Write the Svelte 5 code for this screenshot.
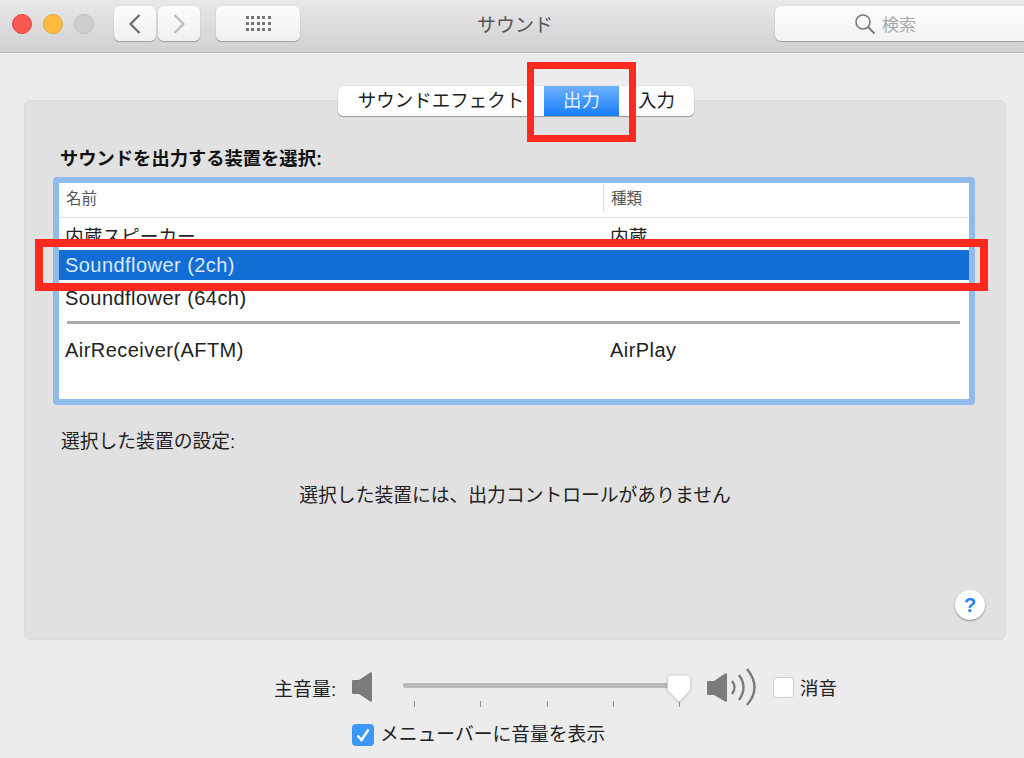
<script>
	const devices = [
		{ name: '内蔵スピーカー', type: '内蔵', cjk: true },
		{ name: 'Soundflower (2ch)', type: '', selected: true },
		{ name: 'Soundflower (64ch)', type: '' }
	];
	const ticks = [0, 1, 2, 3, 4];
</script>

<div class="window">
	<header class="toolbar">
		<div class="toolbar-left">
			<div class="lights">
				<span class="light red"></span>
				<span class="light yellow"></span>
				<span class="light gray"></span>
			</div>
			<div class="nav">
				<button class="tool-btn nav-btn" type="button" aria-label="戻る">
					<svg width="14" height="22" viewBox="0 0 14 22"><path d="M11.5 2 L2.5 11 L11.5 20" fill="none" stroke="#6c6c6c" stroke-width="2.2" /></svg>
				</button>
				<button class="tool-btn nav-btn" type="button" aria-label="進む">
					<svg width="14" height="22" viewBox="0 0 14 22"><path d="M2.5 2 L11.5 11 L2.5 20" fill="none" stroke="#bdbdbd" stroke-width="2.2" /></svg>
				</button>
			</div>
			<button class="tool-btn grid-btn" type="button" aria-label="すべて表示">
				<span class="dots">
					{#each Array(15) as _}
						<i></i>
					{/each}
				</span>
			</button>
		</div>
		<div class="title">サウンド</div>
		<div class="search">
			<svg width="22" height="22" viewBox="0 0 22 22">
				<circle cx="9" cy="9" r="7" fill="none" stroke="#777" stroke-width="1.6" />
				<path d="M14 14 L20.5 20.5" stroke="#777" stroke-width="1.8" />
			</svg>
			<span>検索</span>
		</div>
	</header>

	<main class="content">
		<section class="panel">
			<div class="tabs">
				<div class="tab first">サウンドエフェクト</div>
				<div class="tab active">出力</div>
				<div class="tab last">入力</div>
			</div>

			<h2 class="heading">サウンドを出力する装置を選択:</h2>

			<div class="list">
				<div class="list-head">
					<div class="col-name">名前</div>
					<div class="col-type">種類</div>
				</div>
				{#each devices as d}
					<div class="row" class:selected={d.selected} class:cjk={d.cjk}>
						<div class="col-name">{d.name}</div>
						<div class="col-type">{d.type}</div>
					</div>
				{/each}
				<div class="divider"></div>
				<div class="row">
					<div class="col-name">AirReceiver(AFTM)</div>
					<div class="col-type">AirPlay</div>
				</div>
			</div>

			<div class="settings-label">選択した装置の設定:</div>
			<div class="no-controls">選択した装置には、出力コントロールがありません</div>

			<div class="help-row">
				<button class="help" type="button">?</button>
			</div>
		</section>

		<div class="volume">
			<span class="volume-label">主音量:</span>
			<svg class="spk-low" width="20" height="30" viewBox="0 0 20 30">
				<path d="M0 9 Q0 8 1 8 L7 8 L19 0 L20 1 L20 29 L19 30 L7 22 L1 22 Q0 22 0 21 Z" fill="#7b7b7b" />
			</svg>
			<div class="slider">
				<div class="track"></div>
				<div class="ticks">
					{#each ticks as t}
						<i></i>
					{/each}
				</div>
				<svg class="thumb" width="26" height="33" viewBox="0 0 26 33">
					<path d="M5 2 H21 Q24.5 2 24.5 5.5 V17 L13 29 L1.5 17 V5.5 Q1.5 2 5 2 Z" fill="#fff" stroke="#d4d4d4" />
				</svg>
			</div>
			<svg class="spk-high" width="52" height="38" viewBox="0 0 52 38">
				<path d="M1 14 Q1 13 2 13 L8 13 L20 5 L21 6 L21 33 L20 34 L8 27 L2 27 Q1 27 1 26 Z" fill="#7b7b7b" />
				<path d="M26 13 Q31 19.500 26 26" fill="none" stroke="#7b7b7b" stroke-width="2.4" />
				<path d="M33 7 Q42 19.500 33 32" fill="none" stroke="#7b7b7b" stroke-width="2.4" />
				<path d="M41 1 Q56 19.500 41 37" fill="none" stroke="#7b7b7b" stroke-width="2.4" />
			</svg>
			<span class="mute-box"></span>
			<span class="mute-label">消音</span>
		</div>

		<div class="menubar-opt">
			<span class="check">
				<svg width="16" height="16" viewBox="0 0 16 16"><path d="M2.500 8.500 L6.500 13 L13.500 2.500" fill="none" stroke="#fff" stroke-width="2.400" /></svg>
			</span>
			<span>メニューバーに音量を表示</span>
		</div>
	</main>

	<!-- annotations drawn on top of the screenshot -->
	<div class="mark mark-tab"></div>
	<div class="mark mark-row"></div>
</div>

<style>
	:global(body) {
		margin: 0;
		background: #ececec;
	}

	.window {
		position: relative;
		width: 1024px;
		height: 758px;
		overflow: hidden;
		background: #ececec;
		color: #222;
		font-family: 'Liberation Sans', 'Noto Sans CJK JP', sans-serif;
	}

	.toolbar {
		display: grid;
		grid-template-columns: 1fr auto 1fr;
		align-items: center;
		box-sizing: border-box;
		height: 53px;
		padding-bottom: 5px;
		background: linear-gradient(#e9e7e9, #d2d0d2);
		border-bottom: 1px solid #b9b7b9;
	}

	.toolbar-left {
		display: flex;
		align-items: center;
		padding-left: 12px;
	}

	.lights {
		display: flex;
		gap: 11px;
	}

	.light {
		width: 20px;
		height: 20px;
		box-sizing: border-box;
		border-radius: 50%;
		border: 1px solid transparent;
	}

	.red {
		background: #fc5753;
		border-color: #e5443f;
	}

	.yellow {
		background: #fdbc40;
		border-color: #e3a52f;
	}

	.gray {
		background: #cfcdcf;
		border-color: #bdbbbd;
	}

	.nav {
		display: flex;
		gap: 2px;
		margin-left: 20px;
	}

	.tool-btn {
		display: flex;
		align-items: center;
		justify-content: center;
		box-sizing: border-box;
		height: 35px;
		padding: 0;
		background: linear-gradient(#fcfcfc, #f0f0f0);
		border: none;
		border-radius: 6px;
		box-shadow: 0 1px 1px rgba(0, 0, 0, 0.25), 0 0 1px rgba(0, 0, 0, 0.2);
	}

	.nav-btn {
		width: 42px;
	}

	.grid-btn {
		width: 84px;
		margin-left: 16px;
	}

	.dots {
		display: grid;
		grid-template-columns: repeat(5, 3px);
		gap: 3px 2.500px;
	}

	.dots i {
		width: 3px;
		height: 3px;
		background: #757575;
	}

	.title {
		position: relative;
		left: 3px;
		font-size: 19px;
		color: #555;
	}

	.search {
		display: flex;
		align-items: center;
		justify-content: center;
		gap: 6px;
		box-sizing: border-box;
		width: 254px;
		height: 35px;
		padding-right: 34px;
		justify-self: end;
		margin-right: -5px;
		background: linear-gradient(#fcfcfc, #f3f3f3);
		border-radius: 6px;
		box-shadow: 0 1px 1px rgba(0, 0, 0, 0.25), 0 0 1px rgba(0, 0, 0, 0.2);
		font-size: 17px;
		color: #a9a9a9;
	}

	.content {
		padding: 47px 18px 0 24px;
	}

	.panel {
		display: flex;
		flex-direction: column;
		box-sizing: border-box;
		height: 540px;
		background: #e1e1e1;
		border: 1px solid #dcdcdc;
		border-radius: 6px;
	}

	.tabs {
		display: flex;
		align-self: flex-start;
		height: 30px;
		margin: -15px 0 0 313px;
		background: #fff;
		border-radius: 5px;
		box-shadow: 0 1px 1px rgba(0, 0, 0, 0.3), 0 0 1px rgba(0, 0, 0, 0.35);
		font-size: 18.5px;
		line-height: 30px;
		color: #1d1d1d;
	}

	.tab {
		text-align: center;
		white-space: nowrap;
	}

	.first {
		width: 206px;
	}

	.active {
		width: 75px;
		background: linear-gradient(#6fb1fb, #187dfb);
		color: #e8f2ff;
	}

	.last {
		width: 75px;
	}

	.heading {
		margin: 31px 0 0 35px;
		font-size: 18.3px;
		line-height: 24px;
		font-weight: 700;
		color: #111;
	}

	.list {
		box-sizing: border-box;
		height: 228px;
		margin: 6px 30px 0 28px;
		background: #fff;
		border: 6px solid #90bcec;
		border-radius: 4px;
		font-size: 20px;
		letter-spacing: 0.45px;
	}

	.list-head {
		display: flex;
		align-items: center;
		height: 35px;
		box-sizing: border-box;
		padding-bottom: 3px;
		border-bottom: 1px solid #e2e2e2;
		font-size: 15.5px;
		line-height: 27px;
		letter-spacing: 0;
		color: #555;
	}

	.list-head .col-name {
		padding-left: 7px;
	}

	.list-head .col-type {
		padding-left: 7px;
		height: 27px;
		border-left: 1px solid #dedede;
	}

	.col-name {
		width: 544px;
		flex: none;
		box-sizing: border-box;
		padding-left: 6px;
	}

	.col-type {
		flex: 1;
		padding-left: 7px;
	}

	.row {
		display: flex;
		align-items: center;
		height: 32px;
		color: #222;
	}

	.row.cjk {
		font-size: 18.7px;
		letter-spacing: 0;
	}

	.row.selected {
		height: 30px;
		margin: 0 0 2px;
		background: #126dd5;
		color: #dbe8f8;
	}

	.divider {
		height: 3px;
		margin: 7px 9px 10px 8px;
		background: #ababab;
	}

	.settings-label {
		margin: 25px 0 0 36px;
		font-size: 18.8px;
		line-height: 24px;
		color: #222;
	}

	.no-controls {
		margin-top: 30px;
		font-size: 18.8px;
		line-height: 24px;
		text-align: center;
		color: #222;
	}

	.help-row {
		display: flex;
		justify-content: flex-end;
		margin: 82px 20px 0 0;
	}

	.help {
		width: 30px;
		height: 30px;
		padding: 0;
		background: #fff;
		border: none;
		border-radius: 50%;
		box-shadow: 0 1px 2px rgba(0, 0, 0, 0.4);
		font: 700 20px 'Liberation Sans', sans-serif;
		color: #1f84f5;
	}

	.volume {
		display: flex;
		align-items: center;
		height: 40px;
		margin: 27px 0 0 250px;
		font-size: 19px;
	}

	.volume-label {
		width: 78px;
		flex: none;
	}

	.spk-low {
		flex: none;
	}

	.slider {
		position: relative;
		flex: none;
		width: 290px;
		height: 40px;
		margin-left: 31px;
	}

	.track {
		position: absolute;
		left: 0;
		right: 12px;
		top: 16px;
		height: 5px;
		background: #b9b9b9;
		border-radius: 3px;
	}

	.ticks {
		position: absolute;
		left: 11px;
		top: 34px;
		display: flex;
		justify-content: space-between;
		width: 266px;
	}

	.ticks i {
		width: 1px;
		height: 6px;
		background: #8c8c8c;
	}

	.thumb {
		position: absolute;
		left: 263px;
		top: 6px;
		filter: drop-shadow(0 1px 1px rgba(0, 0, 0, 0.15));
	}

	.spk-high {
		flex: none;
		margin-left: 13px;
	}

	.mute-box {
		box-sizing: border-box;
		width: 21px;
		height: 21px;
		margin-left: 15px;
		background: #fff;
		border: 1px solid #cfcfcf;
		border-radius: 4px;
	}

	.mute-label {
		margin-left: 6px;
		font-size: 18.5px;
	}

	.menubar-opt {
		display: flex;
		align-items: center;
		gap: 6px;
		margin: 16px 0 0 328px;
		font-size: 18.8px;
		line-height: 24px;
	}

	.check {
		display: flex;
		align-items: center;
		justify-content: center;
		width: 22px;
		height: 22px;
		background: #3d97f8;
		border-radius: 4px;
	}

	.mark {
		position: absolute;
		box-sizing: border-box;
		border: 8px solid #ff2a1f;
		pointer-events: none;
	}

	.mark-tab {
		left: 527px;
		top: 62px;
		width: 109px;
		height: 80px;
		border-width: 7px;
	}

	.mark-row {
		left: 35px;
		top: 239px;
		width: 953px;
		height: 52px;
	}
</style>
